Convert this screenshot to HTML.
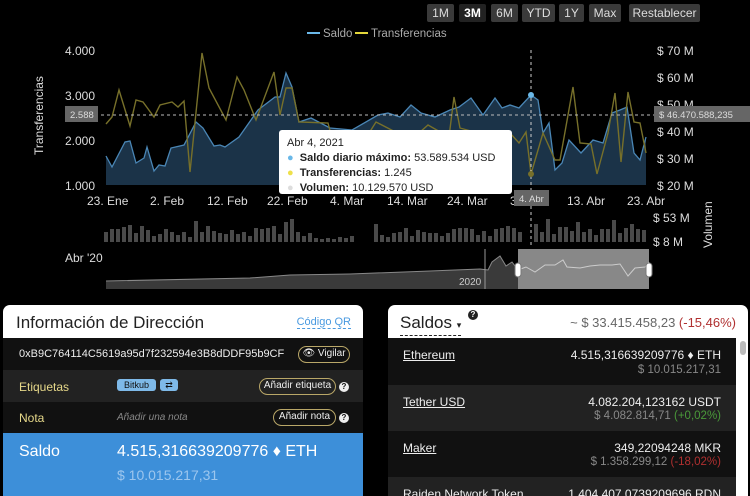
<!DOCTYPE html>
<html><head><meta charset="utf-8"><style>
*{box-sizing:border-box;margin:0;padding:0}
body{width:750px;height:496px;background:#000;font-family:"Liberation Sans",sans-serif;position:relative;overflow:hidden;color:#fff}
.btn{position:absolute;top:4px;height:18px;background:#3a3a3a;border-radius:2px;color:#ddd;font-size:12px;line-height:18px;text-align:center}
.ab{position:absolute}
.panel{position:absolute;top:305px;background:#fff;border-radius:7px 7px 0 0;overflow:hidden}
.row{position:absolute;left:0;right:0}
.pill{position:absolute;border:1.5px solid #b9a768;border-radius:10px;color:#eee;font-size:10px;height:17px;line-height:14px;text-align:center}
.q{position:absolute;width:10px;height:10px;border-radius:50%;background:#eee;color:#111;font-size:8px;font-weight:bold;line-height:10px;text-align:center}
.u{text-decoration:underline;color:#eee;font-size:12px;position:absolute;left:15px}
.r1{position:absolute;right:15px;font-size:12px;color:#eee;text-align:right}
.r2{position:absolute;right:15px;font-size:11.5px;color:#888;text-align:right}
</style></head><body>
<div class="btn" style="left:427px;width:27px">1M</div>
<div class="btn" style="left:459px;width:27px;background:#222;color:#fff;font-weight:bold">3M</div>
<div class="btn" style="left:491px;width:27px">6M</div>
<div class="btn" style="left:522px;width:33px">YTD</div>
<div class="btn" style="left:559px;width:25px">1Y</div>
<div class="btn" style="left:589px;width:32px">Max</div>
<div class="btn" style="left:629px;width:71px">Restablecer</div>

<svg class="ab" style="left:0;top:0" width="750" height="300" font-family="Liberation Sans" font-size="12">
<line x1="307" y1="33" x2="320" y2="33" stroke="#6ab8e8" stroke-width="2"/><text x="323" y="37" fill="#aaa" font-size="11.5">Saldo</text>
<line x1="355" y1="33" x2="368" y2="33" stroke="#e3d63a" stroke-width="2"/><text x="371" y="37" fill="#aaa" font-size="11.5">Transferencias</text>
<g fill="#ddd" font-size="12"><text x="65" y="55">4.000</text><text x="65" y="100">3.000</text><text x="65" y="145">2.000</text><text x="65" y="190">1.000</text>
<text x="657" y="55">$ 70 M</text><text x="657" y="82">$ 60 M</text><text x="657" y="109">$ 50 M</text><text x="657" y="136">$ 40 M</text><text x="657" y="163">$ 30 M</text><text x="657" y="190">$ 20 M</text></g>
<text transform="translate(43,155) rotate(-90)" fill="#ddd" font-size="12">Transferencias</text>
<text transform="translate(712,248) rotate(-90)" fill="#ddd" font-size="12">Volumen</text>
<polygon fill="#1b3348" points="106,185 106,156 112,167 125,142 130,141 136,163 144,158 147,147 154,171 159,165 165,166 171,148 184,145 196,122 203,128 214,146 220,145 225,147 239,137 258,110 275,97 280,97 286,73 292,87 299,122 311,118 330,128 352,130 378,115 388,113 400,117 411,105 421,113 435,117 450,110 459,107 471,98 483,115 495,98 502,108 510,105 519,108 531,95 538,100 543,133 549,123 555,170 562,163 569,140 581,153 593,140 603,143 612,113 620,110 627,107 634,153 640,160 646,137 646,185"/>
<polyline fill="none" stroke="#4a86b5" stroke-width="1.3" points="106,156 112,167 125,142 130,141 136,163 144,158 147,147 154,171 159,165 165,166 171,148 184,145 196,122 203,128 214,146 220,145 225,147 239,137 258,110 275,97 280,97 286,73 292,87 299,122 311,118 330,128 352,130 378,115 388,113 400,117 411,105 421,113 435,117 450,110 459,107 471,98 483,115 495,98 502,108 510,105 519,108 531,95 538,100 543,133 549,123 555,170 562,163 569,140 581,153 593,140 603,143 612,113 620,110 627,107 634,153 640,160 646,137"/>
<polyline fill="none" stroke="#77702a" stroke-width="1.4" points="106,124 112,117 119,90 130,126 136,100 143,102 154,117 160,105 172,102 178,107 184,101 190,172 202,53 209,88 226,120 237,77 244,90 256,120 274,72 280,115 286,88 292,88 299,122 328,123 335,150 354,157 376,122 411,140 428,125 449,137 454,97 460,128 478,133 498,140 510,133 519,143 526,132 531,174 543,133 555,160 560,160 573,87 580,143 591,144 597,174 608,133 615,93 621,162 628,92 634,122 640,123 646,153"/>
<line x1="65" y1="115" x2="655" y2="115" stroke="#bbb" stroke-dasharray="3,3"/>
<line x1="531" y1="50" x2="531" y2="245" stroke="#ccc" stroke-dasharray="3,3"/>
<circle cx="531" cy="95" r="3" fill="#6ab8e8"/><circle cx="531" cy="174" r="3" fill="#77702a"/>
<rect x="65" y="106" width="33" height="16" fill="#666"/><text x="70" y="118" fill="#ddd" font-size="9.5">2.588</text>
<rect x="654" y="106" width="96" height="16" fill="#666"/><text x="659" y="118" fill="#ddd" font-size="9.5">$ 46.470.588,235</text>
<g fill="#ddd" font-size="12"><text x="87" y="205">23. Ene</text><text x="150" y="205">2. Feb</text><text x="207" y="205">12. Feb</text><text x="267" y="205">22. Feb</text><text x="330" y="205">4. Mar</text><text x="387" y="205">14. Mar</text><text x="447" y="205">24. Mar</text><text x="567" y="205">13. Abr</text><text x="627" y="205">23. Abr</text><text x="510" y="205">3</text></g>
<rect x="514" y="190" width="35" height="16" fill="#666"/><text x="519" y="202" fill="#ddd" font-size="9.5">4. Abr</text>
<g fill="#4a4a4a">
<rect x="104" y="232" width="4" height="10"/><rect x="110" y="229" width="4" height="13"/><rect x="116" y="229" width="4" height="13"/><rect x="122" y="227" width="4" height="15"/><rect x="128" y="225" width="4" height="17"/><rect x="134" y="233" width="4" height="9"/><rect x="140" y="226" width="4" height="16"/><rect x="146" y="230" width="4" height="12"/><rect x="152" y="236" width="4" height="6"/><rect x="158" y="234" width="4" height="8"/><rect x="164" y="229" width="4" height="13"/><rect x="170" y="232" width="4" height="10"/><rect x="176" y="235" width="4" height="7"/><rect x="182" y="232" width="4" height="10"/><rect x="188" y="237" width="4" height="5"/><rect x="194" y="221" width="4" height="21"/><rect x="200" y="232" width="4" height="10"/><rect x="206" y="226" width="4" height="16"/><rect x="212" y="231" width="4" height="11"/><rect x="218" y="233" width="4" height="9"/><rect x="224" y="234" width="4" height="8"/><rect x="230" y="230" width="4" height="12"/><rect x="236" y="234" width="4" height="8"/><rect x="242" y="232" width="4" height="10"/><rect x="248" y="236" width="4" height="6"/><rect x="254" y="228" width="4" height="14"/><rect x="260" y="229" width="4" height="13"/><rect x="266" y="228" width="4" height="14"/><rect x="272" y="226" width="4" height="16"/><rect x="278" y="234" width="4" height="8"/><rect x="284" y="222" width="4" height="20"/><rect x="290" y="219" width="4" height="23"/><rect x="296" y="232" width="4" height="10"/><rect x="302" y="236" width="4" height="6"/><rect x="308" y="233" width="4" height="9"/><rect x="314" y="238" width="4" height="4"/><rect x="320" y="239" width="4" height="3"/><rect x="326" y="238" width="4" height="4"/><rect x="332" y="239" width="4" height="3"/><rect x="338" y="237" width="4" height="5"/><rect x="344" y="238" width="4" height="4"/><rect x="350" y="236" width="4" height="6"/><rect x="374" y="224" width="4" height="18"/><rect x="380" y="235" width="4" height="7"/><rect x="386" y="237" width="4" height="5"/><rect x="392" y="233" width="4" height="9"/><rect x="398" y="232" width="4" height="10"/><rect x="404" y="228" width="4" height="14"/><rect x="410" y="236" width="4" height="6"/><rect x="416" y="230" width="4" height="12"/><rect x="422" y="232" width="4" height="10"/><rect x="428" y="233" width="4" height="9"/><rect x="434" y="233" width="4" height="9"/><rect x="440" y="236" width="4" height="6"/><rect x="446" y="233" width="4" height="9"/><rect x="452" y="229" width="4" height="13"/><rect x="458" y="228" width="4" height="14"/><rect x="464" y="228" width="4" height="14"/><rect x="470" y="229" width="4" height="13"/><rect x="476" y="235" width="4" height="7"/><rect x="482" y="231" width="4" height="11"/><rect x="488" y="236" width="4" height="6"/><rect x="494" y="229" width="4" height="13"/><rect x="500" y="228" width="4" height="14"/><rect x="506" y="226" width="4" height="16"/><rect x="512" y="228" width="4" height="14"/><rect x="518" y="232" width="4" height="10"/><rect x="534" y="224" width="4" height="18"/><rect x="540" y="232" width="4" height="10"/><rect x="546" y="219" width="4" height="23"/><rect x="552" y="234" width="4" height="8"/><rect x="558" y="227" width="4" height="15"/><rect x="564" y="227" width="4" height="15"/><rect x="570" y="231" width="4" height="11"/><rect x="576" y="222" width="4" height="20"/><rect x="582" y="232" width="4" height="10"/><rect x="588" y="229" width="4" height="13"/><rect x="594" y="235" width="4" height="7"/><rect x="600" y="229" width="4" height="13"/><rect x="606" y="229" width="4" height="13"/><rect x="612" y="220" width="4" height="22"/><rect x="618" y="233" width="4" height="9"/><rect x="624" y="228" width="4" height="14"/><rect x="630" y="224" width="4" height="18"/><rect x="636" y="229" width="4" height="13"/><rect x="642" y="230" width="4" height="12"/>
</g>
<text x="653" y="222" fill="#ddd" font-size="12">$ 53 M</text><text x="653" y="246" fill="#ddd" font-size="12">$ 8 M</text>
<text x="65" y="262" fill="#ddd" font-size="12">Abr '20</text>
<polygon fill="#3a3a3a" points="106,289 106,281 250,278 290,275 350,274 430,271 480,269 488,270 492,262 500,256 506,266 512,262 518,270 518,289"/>
<polyline fill="none" stroke="#888" stroke-width="1" points="106,281 250,278 290,275 350,274 430,271 480,269 488,270 492,262 500,256 506,266 512,262 518,270"/>
<rect x="518" y="249" width="131" height="40" fill="#888"/>
<polyline fill="none" stroke="#ccc" stroke-width="1" points="518,270 526,267 535,272 545,265 555,265 563,260 567,267 580,268 590,266 600,265 612,265 620,264 624,270 628,276 635,268 645,267 649,262"/>
<line x1="485" y1="249" x2="485" y2="289" stroke="#999"/>
<text x="459" y="285" fill="#ccc" font-size="10">2020</text>
<rect x="515" y="263" width="6" height="14" rx="3" fill="#fff" stroke="#777"/><rect x="646" y="263" width="6" height="14" rx="3" fill="#fff" stroke="#777"/>
</svg>

<div class="ab" style="left:279px;top:130px;width:233px;height:64px;background:#fff;border-radius:3px;color:#222;font-size:11px;line-height:15px;padding:6px 8px;white-space:nowrap">
<div>Abr 4, 2021</div>
<div><span style="color:#6ab8e8">●</span>&nbsp; <b>Saldo diario máximo:</b> 53.589.534 USD</div>
<div><span style="color:#eee04a">●</span>&nbsp; <b>Transferencias:</b> 1.245</div>
<div><span style="color:#ddd">●</span>&nbsp; <b>Volumen:</b> 10.129.570 USD</div>
</div>

<div class="panel" style="left:3px;width:360px;height:191px">
<div class="row" style="top:0;height:33px;color:#222;font-size:17px;padding:8px 0 0 13px">Información de Dirección</div>
<div class="ab" style="right:12px;top:11px;font-size:11px;color:#4a9ae0;border-bottom:1px dashed #4a9ae0">Código QR</div>
<div class="row" style="top:33px;height:32px;background:#111"><span class="ab" style="left:16px;top:10px;font-size:11px;color:#eee">0xB9C764114C5619a95d7f232594e3B8dDDF95b9CF</span><div class="pill" style="left:295px;top:8px;width:52px">👁 Vigilar</div></div>
<div class="row" style="top:65px;height:32px;background:#222"><span class="ab" style="left:16px;top:10px;font-size:12px;color:#e6d88a">Etiquetas</span>
<span class="ab" style="left:114px;top:9px;height:12px;width:39px;background:#7eb9e8;color:#111;font-size:9px;line-height:12px;text-align:center;border-radius:3px">Bitkub</span>
<span class="ab" style="left:157px;top:9px;height:12px;width:18px;background:#7eb9e8;color:#111;font-size:9px;line-height:12px;text-align:center;border-radius:3px">⇄</span>
<div class="pill" style="left:256px;top:8px;width:77px">Añadir etiqueta</div><div class="q" style="left:336px;top:12px">?</div></div>
<div class="row" style="top:97px;height:31px;background:#111"><span class="ab" style="left:16px;top:9px;font-size:12px;color:#e6d88a">Nota</span><span class="ab" style="left:114px;top:10px;font-size:10px;color:#888;font-style:italic">Añadir una nota</span>
<div class="pill" style="left:270px;top:7px;width:63px">Añadir nota</div><div class="q" style="left:336px;top:11px">?</div></div>
<div class="row" style="top:128px;height:63px;background:#3d8fd9"><span class="ab" style="left:16px;top:10px;font-size:16px">Saldo</span><span class="ab" style="left:114px;top:10px;font-size:16px">4.515,316639209776 ♦ ETH</span><span class="ab" style="left:114px;top:34px;font-size:14px;color:#9cc6ee">$ 10.015.217,31</span></div>
</div>

<div class="panel" style="left:388px;width:360px;height:191px">
<div class="ab" style="left:12px;top:8px;font-size:17px;color:#222;border-bottom:1px dashed #222;line-height:19px">Saldos <span style="font-size:9px">▾</span></div>
<div class="q" style="left:80px;top:5px;background:#222;color:#fff">?</div>
<div class="ab" style="right:12px;top:10px;font-size:13px;color:#666">~ $ 33.415.458,23 <span style="color:#b03030">(-15,46%)</span></div>
<div class="row" style="top:33px;height:47px;right:12px;background:#111"><span class="u" style="top:10px">Ethereum</span><span class="r1" style="top:10px">4.515,316639209776 ♦ ETH</span><span class="r2" style="top:26px">$ 10.015.217,31</span></div>
<div class="row" style="top:80px;height:46px;right:12px;background:#222"><span class="u" style="top:10px">Tether USD</span><span class="r1" style="top:10px">4.082.204,123162 USDT</span><span class="r2" style="top:25px">$ 4.082.814,71 <span style="color:#4a9a3a">(+0,02%)</span></span></div>
<div class="row" style="top:126px;height:46px;right:12px;background:#111"><span class="u" style="top:10px">Maker</span><span class="r1" style="top:10px">349,22094248 MKR</span><span class="r2" style="top:25px">$ 1.358.299,12 <span style="color:#b03030">(-18,02%)</span></span></div>
<div class="row" style="top:172px;height:30px;right:12px;background:#222"><span class="u" style="top:10px;text-decoration:none">Raiden Network Token</span><span class="r1" style="top:10px">1.404.407,0739209696 RDN</span></div>
<div class="ab" style="right:2px;top:36px;width:6px;height:14px;border-radius:3px;background:#bbb"></div>
</div>
</body></html>
